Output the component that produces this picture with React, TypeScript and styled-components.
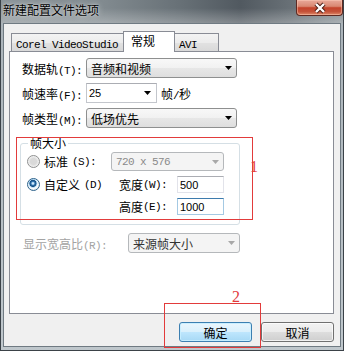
import React from 'react';
import styled, { createGlobalStyle, css } from 'styled-components';

const GlobalStyle = createGlobalStyle`
  html, body {
    margin: 0;
    padding: 0;
  }
  body {
    font-family: "Noto Sans CJK SC", "Liberation Sans", sans-serif;
    font-size: 12px;
    color: #000;
  }
`;

const RED = '#e23b3b';

const Window = styled.div`
  position: relative;
  width: 344px;
  height: 351px;
  box-sizing: border-box;
  display: flex;
  flex-direction: column;
  border: 1px solid #3b4248;
  border-top: none;
  background: linear-gradient(180deg, #a9b2b8 0%, #bfc7cc 100%);
  overflow: hidden;
`;

const TitleBar = styled.div`
  height: 23px;
  flex: none;
  display: flex;
  justify-content: space-between;
  align-items: flex-start;
  background:
    linear-gradient(180deg, rgba(255, 255, 255, 0) 35%, rgba(255, 255, 255, 0.28) 100%),
    linear-gradient(90deg, #8a9398 0%, #818a8f 30%, #687177 52%, #515960 70%, #697177 85%, #8a9398 100%);
`;

const Title = styled.span`
  padding-left: 2px;
  line-height: 19px;
  font-size: 12px;
  color: #000;
  text-shadow: 0 0 6px rgba(255, 255, 255, 0.75), 0 0 2px rgba(255, 255, 255, 0.6);
`;

const CloseButton = styled.div`
  width: 47px;
  height: 16px;
  box-sizing: border-box;
  border: 1px solid #5e2a22;
  border-top: none;
  border-radius: 0 0 4px 4px;
  display: flex;
  align-items: center;
  justify-content: center;
  background: linear-gradient(180deg, #e9a99a 0%, #d98872 42%, #c4432b 52%, #c4533a 78%, #e08a6a 100%);
  box-shadow: inset 0 0 0 1px rgba(255, 210, 190, 0.45);
`;

const CloseGlyph = () => (
  <svg width="14" height="12" viewBox="0 0 14 12">
    <path d="M3 2l8 8M11 2l-8 8" stroke="#4a1a12" strokeWidth="4.2" />
    <path d="M3 2l8 8M11 2l-8 8" stroke="#fff" strokeWidth="2.4" />
  </svg>
);

const Client = styled.div`
  flex: 1;
  margin: 0 2px 3px 2px;
  border: 1px solid #6f7a82;
  background: #f0f0f0;
  padding: 7px 6px 4px 5px;
  display: flex;
  flex-direction: column;
`;

const Latin = styled.span`
  font-family: "Liberation Mono", monospace;
  font-size: 11px;
  letter-spacing: -0.6px;
`;

const TabStrip = styled.div`
  display: flex;
  align-items: flex-end;
  height: 20px;
  padding-left: 2px;
`;

const Tab = styled.div<{ $width: number; $active?: boolean }>`
  box-sizing: border-box;
  width: ${(p) => p.$width}px;
  height: 18px;
  margin-right: -1px;
  padding-left: 4px;
  border: 1px solid #898c95;
  border-bottom: none;
  line-height: 17px;
  white-space: nowrap;
  background: linear-gradient(180deg, #f3f3f3 0%, #ececec 50%, #e2e2e2 51%, #d9d9d9 100%);
  ${(p) =>
    p.$active &&
    css`
      height: 21px;
      margin-bottom: -1px;
      padding-left: 7px;
      background: #fff;
      position: relative;
      z-index: 1;
    `}
`;

const Panel = styled.div`
  flex: 1;
  background: #fff;
  border: 1px solid #898c95;
  padding: 6px 0 0 12px;
  display: flex;
  flex-direction: column;
  gap: 5px;
`;

const FieldRow = styled.div<{ $indent?: number; $gapTop?: number }>`
  display: flex;
  align-items: center;
  height: 20px;
  margin-left: ${(p) => p.$indent ?? 0}px;
  margin-top: ${(p) => p.$gapTop ?? 0}px;
`;

const Label = styled.span<{ $width: number; $muted?: boolean }>`
  flex: none;
  width: ${(p) => p.$width}px;
  white-space: nowrap;
  color: ${(p) => (p.$muted ? '#a3a3a3' : '#000')};
`;

const Arrow = ({ color = '#000' }: { color?: string }) => (
  <svg width="7" height="4" viewBox="0 0 7 4">
    <path d="M0 0h7L3.5 4z" fill={color} />
  </svg>
);

const Select = styled.div<{ $width: number; $height?: number; $disabled?: boolean }>`
  box-sizing: border-box;
  width: ${(p) => p.$width}px;
  height: ${(p) => p.$height ?? 20}px;
  display: flex;
  align-items: center;
  justify-content: space-between;
  padding: 0 4px 0 4px;
  border: 1px solid #8e8f8f;
  border-radius: 3px;
  white-space: nowrap;
  background: linear-gradient(180deg, #f8f8f8 0%, #f1f1f1 50%, #e7e7e7 51%, #dedede 100%);
  ${(p) =>
    p.$disabled &&
    css`
      border-color: #b5b8bb;
      background: #f4f4f4;
      color: #8a8a8a;
    `}
`;

const FrameSelect = styled(Select)`
  grid-column: 2 / 4;
  align-self: center;
`;

const SelectValue = styled.span`
  color: #333;
`;

const Combo = styled.div<{ $width: number }>`
  box-sizing: border-box;
  width: ${(p) => p.$width}px;
  height: 20px;
  display: flex;
  align-items: center;
  justify-content: space-between;
  padding: 0 5px 0 2px;
  border: 1px solid #c3c6cc;
  border-top-color: #abadb3;
  background: #fff;
`;

const Digits = styled.span`
  font-family: "Liberation Sans", sans-serif;
  font-size: 11px;
`;

const Unit = styled.span`
  margin-left: 4px;
`;

const GroupBox = styled.fieldset`
  align-self: flex-start;
  width: 220px;
  box-sizing: border-box;
  margin: 3px 0 0 -2px;
  padding: 2px 15px 9px 6px;
  border: 1px solid #d5dfe5;
  border-radius: 3px;
  display: grid;
  grid-template-columns: 84px 66px 47px;
  grid-template-rows: 19px 17px 17px;
  row-gap: 5px;
`;

const Legend = styled.legend`
  margin-left: 1px;
  padding: 0 2px;
  line-height: 14px;
  font-size: 12px;
`;

const RadioOption = styled.label`
  grid-column: 1;
  display: flex;
  align-items: center;
  gap: 4px;
  white-space: nowrap;
`;

const RadioDot = styled.span<{ $checked?: boolean }>`
  flex: none;
  width: 13px;
  height: 13px;
  box-sizing: border-box;
  border-radius: 50%;
  border: 1px solid #8e8f8f;
  background: radial-gradient(circle at 50% 50%, #d9d9d9 0 3px, #eeeeee 5px, #fafafa 6px);
  ${(p) =>
    p.$checked &&
    css`
      border-color: #2c628b;
      background:
        radial-gradient(circle at 45% 40%, #cfe9fb 0 0.8px, #2a6fae 2px, #184d7d 3.2px, #a8d3f3 3.8px, #ffffff 5px, #e9eef2 6px);
    `}
`;

const SizeLabel = styled.span`
  grid-column: 2;
  display: flex;
  align-items: center;
  padding-left: 8px;
  white-space: nowrap;
`;

const TextBox = styled.div<{ $focused?: boolean }>`
  grid-column: 3;
  box-sizing: border-box;
  display: flex;
  align-items: center;
  padding-left: 2px;
  border: 1px solid #e2e3ea;
  border-top-color: #abadb3;
  background: #fff;
  font-family: "Liberation Sans", sans-serif;
  font-size: 11px;
  ${(p) =>
    p.$focused &&
    css`
      border-color: #a4c9e3;
      border-top-color: #3d7bad;
    `}
`;

const ButtonRow = styled.div`
  display: flex;
  justify-content: flex-end;
  gap: 9px;
  margin-top: 8px;
`;

const Button = styled.div<{ $default?: boolean }>`
  box-sizing: border-box;
  width: 73px;
  height: 20px;
  display: flex;
  align-items: center;
  justify-content: center;
  border: 1px solid #707070;
  border-radius: 3px;
  background: linear-gradient(180deg, #f2f2f2 0%, #ebebeb 50%, #dddddd 51%, #cfcfcf 100%);
  box-shadow: inset 0 0 0 1px rgba(255, 255, 255, 0.7);
  ${(p) =>
    p.$default &&
    css`
      border-color: #3c7fb1;
      background: linear-gradient(180deg, #eaf6fd 0%, #d9f0fc 50%, #bee6fd 51%, #a7d9f5 100%);
      box-shadow: inset 0 0 0 1px rgba(200, 238, 255, 0.9);
    `}
`;

const Mark = styled.div<{ $x: number; $y: number; $w: number; $h: number }>`
  position: absolute;
  left: ${(p) => p.$x - 1}px;
  top: ${(p) => p.$y}px;
  width: ${(p) => p.$w}px;
  height: ${(p) => p.$h}px;
  box-sizing: border-box;
  border: 1px solid ${RED};
  pointer-events: none;
`;

const MarkNumber = styled.span<{ $x: number; $y: number }>`
  position: absolute;
  left: ${(p) => p.$x - 1}px;
  top: ${(p) => p.$y}px;
  font-family: "Liberation Serif", serif;
  font-size: 16px;
  line-height: 16px;
  color: ${RED};
`;

const App = (): React.ReactElement => (
  <>
    <GlobalStyle />
    <Window>
      <TitleBar>
        <Title>新建配置文件选项</Title>
        <CloseButton>
          <CloseGlyph />
        </CloseButton>
      </TitleBar>
      <Client>
        <TabStrip>
          <Tab $width={113}>
            <Latin>Corel VideoStudio</Latin>
          </Tab>
          <Tab $width={52} $active>
            常规
          </Tab>
          <Tab $width={45}>
            <Latin>AVI</Latin>
          </Tab>
        </TabStrip>
        <Panel>
          <FieldRow>
            <Label $width={64}>
              数据轨<Latin>(T):</Latin>
            </Label>
            <Select $width={151}>
              音频和视频
              <Arrow />
            </Select>
          </FieldRow>
          <FieldRow>
            <Label $width={64}>
              帧速率<Latin>(F):</Latin>
            </Label>
            <Combo $width={71}>
              <Digits>25</Digits>
              <Arrow />
            </Combo>
            <Unit>
              帧<Latin>/</Latin>秒
            </Unit>
          </FieldRow>
          <FieldRow>
            <Label $width={64}>
              帧类型<Latin>(M):</Latin>
            </Label>
            <Select $width={151}>
              低场优先
              <Arrow />
            </Select>
          </FieldRow>
          <GroupBox>
            <Legend>帧大小</Legend>
            <RadioOption>
              <RadioDot />
              标准<Latin>(S):</Latin>
            </RadioOption>
            <FrameSelect $width={113} $height={19} $disabled>
              <Latin>720 x 576</Latin>
              <Arrow color="#a8a8a8" />
            </FrameSelect>
            <RadioOption>
              <RadioDot $checked />
              自定义<Latin>(D)</Latin>
            </RadioOption>
            <SizeLabel>
              宽度<Latin>(W):</Latin>
            </SizeLabel>
            <TextBox>500</TextBox>
            <SizeLabel>
              高度<Latin>(E):</Latin>
            </SizeLabel>
            <TextBox $focused>1000</TextBox>
          </GroupBox>
          <FieldRow $indent={1} $gapTop={3}>
            <Label $width={105} $muted>
              显示宽高比<Latin>(R):</Latin>
            </Label>
            <Select $width={112} $disabled>
              <SelectValue>来源帧大小</SelectValue>
              <Arrow color="#a8a8a8" />
            </Select>
          </FieldRow>
        </Panel>
        <ButtonRow>
          <Button $default>确定</Button>
          <Button>取消</Button>
        </ButtonRow>
      </Client>
      <Mark $x={16} $y={137} $w={237} $h={83} />
      <MarkNumber $x={250} $y={159}>
        1
      </MarkNumber>
      <Mark $x={164} $y={303} $w={97} $h={45} />
      <MarkNumber $x={232} $y={289}>
        2
      </MarkNumber>
    </Window>
  </>
);

export default App;
